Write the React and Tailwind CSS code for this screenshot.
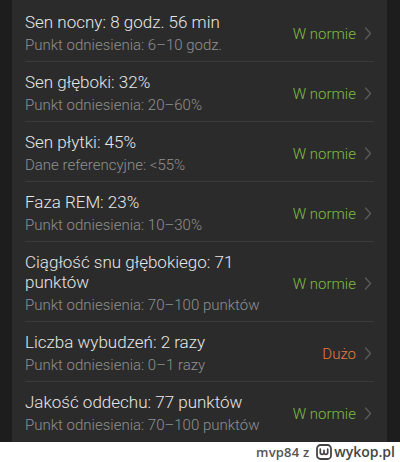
import React from "react";

const rows = [
  { t: "Sen nocny: 8 godz. 56 min", s: "Punkt odniesienia: 6–10 godz.", r: "W normie", ok: true },
  { t: "Sen głęboki: 32%", s: "Punkt odniesienia: 20–60%", r: "W normie", ok: true },
  { t: "Sen płytki: 45%", s: "Dane referencyjne: <55%", r: "W normie", ok: true },
  { t: "Faza REM: 23%", s: "Punkt odniesienia: 10–30%", r: "W normie", ok: true },
  { t: "Ciągłość snu głębokiego: 71 punktów", s: "Punkt odniesienia: 70–100 punktów", r: "W normie", ok: true },
  { t: "Liczba wybudzeń: 2 razy", s: "Punkt odniesienia: 0–1 razy", r: "Dużo", ok: false },
  { t: "Jakość oddechu: 77 punktów", s: "Punkt odniesienia: 70–100 punktów", r: "W normie", ok: true },
];

function Chevron() {
  return (
    <svg width="8" height="13" viewBox="0 0 8 13" className="shrink-0">
      <path d="M1.5 1 L6.5 6.5 L1.5 12" fill="none" stroke="#5b5b5b" strokeWidth="1.3" strokeLinecap="round" strokeLinejoin="round" />
    </svg>
  );
}

function WykopLogo() {
  return (
    <svg width="16" height="16" viewBox="0 0 16 16" className="shrink-0">
      <rect x="1" y="1" width="14" height="14" rx="3.5" fill="none" stroke="#444" strokeWidth="1.8" />
      <path d="M4.3 5.2 V8.6 a1.85 1.85 0 0 0 3.7 0 V6.3 M8 8.6 a1.85 1.85 0 0 0 3.7 0 V5.2" fill="none" stroke="#444" strokeWidth="1.7" strokeLinecap="round" />
    </svg>
  );
}

export default function App() {
  return (
    <div className="w-[400px] h-[462px] flex flex-col bg-white overflow-hidden" style={{ fontFamily: "Roboto, 'Noto Sans', sans-serif" }}>
      <div className="h-[442px] bg-[#1d1d1d] flex pl-[12px] pr-[13px]">
        <div className="flex-1 bg-[#2b2b2b] flex flex-col px-[13px]">
          {rows.map((row, i) => (
            <div key={i} className={i === 0 ? "" : "border-t border-[#3b3b3b]"}>
              <div className={`flex items-center gap-[18px] ${i === 0 ? "pt-[12px]" : "pt-[10px]"} pb-[6px]`}>
                <div className="flex-1 min-w-0 flex flex-col gap-[3px]">
                  <div className="text-[17px] leading-[20px] font-light text-[#e6e6e6]">{row.t}</div>
                  <div className="text-[15px] leading-[20px] font-light text-[#909090]">{row.s}</div>
                </div>
                <div className="flex items-center gap-[8px] pr-[2px]">
                  <span className={`text-[15px] leading-[20px] font-light ${row.ok ? "text-[#7bbd44]" : "text-[#e57d40]"}`}>{row.r}</span>
                  <Chevron />
                </div>
              </div>
            </div>
          ))}
        </div>
      </div>
      <div className="flex-1 flex items-center justify-end pr-[5px] gap-[7px]" style={{ fontFamily: "'Open Sans', sans-serif" }}>
        <span className="text-[13px] font-semibold text-[#555] leading-none tracking-[0.2px]">mvp84 z</span>
        <div className="flex items-center gap-[2px]">
          <WykopLogo />
          <span className="text-[14px] font-semibold text-[#444] leading-none">wykop.pl</span>
        </div>
      </div>
    </div>
  );
}
